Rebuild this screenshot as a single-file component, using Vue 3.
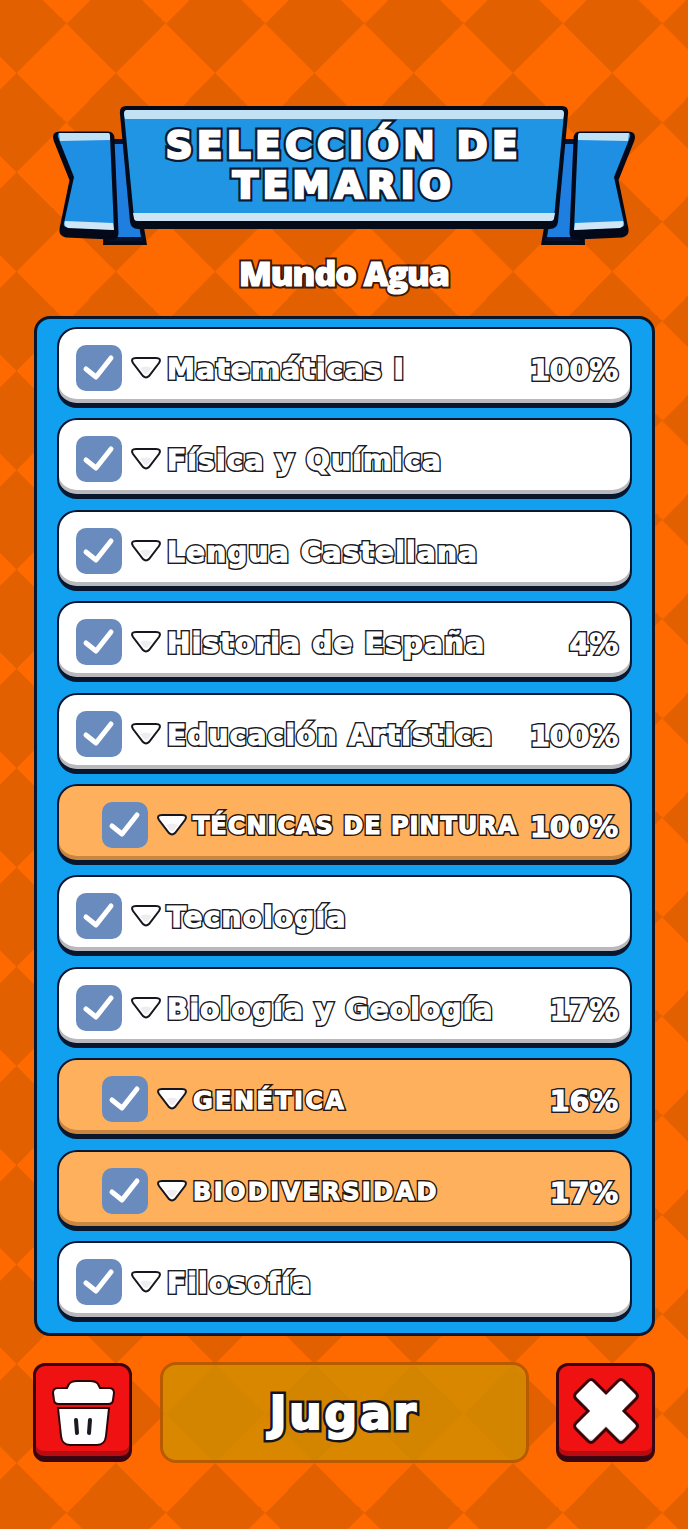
<script setup>
const topics = [
  { name: 'Matemáticas I', pct: '100%' },
  { name: 'Física y Química', pct: '' },
  { name: 'Lengua Castellana', pct: '' },
  { name: 'Historia de España', pct: '4%' },
  { name: 'Educación Artística', pct: '100%' },
  { name: 'TÉCNICAS DE PINTURA', pct: '100%', sub: true, tight: true },
  { name: 'Tecnología', pct: '' },
  { name: 'Biología y Geología', pct: '17%' },
  { name: 'GENÉTICA', pct: '16%', sub: true },
  { name: 'BIODIVERSIDAD', pct: '17%', sub: true },
  { name: 'Filosofía', pct: '' }
]

const crossPath = 'M17 5 Q20 2 23 5 L35 17 L47 5 Q50 2 53 5 L65 17 Q68 20 65 23 L53 35 L65 47 Q68 50 65 53 L53 65 Q50 68 47 65 L35 53 L23 65 Q20 68 17 65 L5 53 Q2 50 5 47 L17 35 L5 23 Q2 20 5 17 Z'
</script>

<template>
  <div class="screen">
    <header class="banner">
      <svg class="ribbon" viewBox="0 0 688 150" width="688" height="150">
        <g v-for="m in ['none', 'matrix(-1 0 0 1 688 0)']" :key="m" :transform="m === 'none' ? undefined : m">
          <path d="M103 139 H147 L142 110 H104 Z" fill="#050a18" />
          <path d="M111 33 H124 L143 135 H109 Z" fill="#06122e" />
          <path d="M114 38 H124 L141 131 H114 Z" fill="#1f7fe0" />
          <path d="M105 132 L114 122 V132 Z" fill="#1d5cc0" />
          <path d="M59 24 H108 Q113 24 113 30 L117 124 Q117 130 111 129 L66 127 Q60 126 61 120 L71 71 L55 31 Q53 24 59 24 Z" fill="#04091a" stroke="#04091a" stroke-width="3" transform="translate(0 3)" />
          <path d="M60 27 H108 Q110 27 110 30 L114 124 L66 121 Q63 120 64 117 L74 71 L58 31 Q57 27 60 27 Z" fill="#1f8fe4" />
          <path d="M59 27 H108 Q110 27 110 30 V34 L60 35 Z" fill="#bfe0f5" />
          <path d="M65 115 L113 117 L114 124 L68 122 Q63 120 65 115 Z" fill="#cfe6f6" />
        </g>
        <path d="M126 0 H562 Q569 0 568 8 L558 116 Q557 123 550 123 H138 Q131 123 130 116 L120 8 Q119 0 126 0 Z" fill="#050a18" />
        <path d="M127 4 H561 Q564 4 564 8 L554 112 Q554 115 550 115 H138 Q134 115 134 112 L124 8 Q124 4 127 4 Z" fill="#1f95e3" />
        <path d="M127 4 H561 Q564 4 564 8 L563 13 H125 L124 8 Q124 4 127 4 Z" fill="#c3e1f5" />
        <path d="M133 107 H555 L554 112 Q554 115 550 115 H138 Q134 115 134 112 Z" fill="#cde4f3" />
      </svg>
      <h1 class="title">
        <span class="ol" data-text="SELECCIÓN DE">SELECCIÓN DE</span>
        <span class="ol" data-text="TEMARIO">TEMARIO</span>
      </h1>
    </header>

    <h2 class="world"><span class="ol" data-text="Mundo Agua">Mundo Agua</span></h2>

    <section class="panel">
      <div v-for="t in topics" :key="t.name" class="row" :class="{ sub: t.sub, tight: t.tight }">
        <span class="check">
          <svg viewBox="0 0 46 46" width="46" height="46">
            <path d="M10 24 L20 32 L35 13" fill="none" stroke="#fff" stroke-width="5" stroke-linecap="round" stroke-linejoin="round" />
          </svg>
        </span>
        <svg class="tri" viewBox="0 0 32 24" width="32" height="24">
          <path d="M6 2 H26 Q32 2 29 7 L19 20 Q16 23 13 20 L3 7 Q0 2 6 2 Z" fill="#fff" stroke="#16161e" stroke-width="2" />
          <path d="M10 12 Q16 9 22 12 L18 17 Q16 19 14 17 Z" fill="#eeeef1" />
        </svg>
        <span class="name-wrap">
          <span class="name ol" :data-text="t.name">{{ t.name }}</span>
        </span>
        <span v-if="t.pct" class="pct ol" :data-text="t.pct">{{ t.pct }}</span>
      </div>
    </section>

    <footer class="actions">
      <button class="square">
        <svg viewBox="0 0 70 70" width="70" height="70">
          <path d="M21 8 Q23 5 29 5 H42 Q48 5 50 8 L52 12 H61 Q66 12 66 17 L65 24 Q65 28 60 28 H11 Q6 28 6 24 L5 17 Q5 12 10 12 H19 Z" fill="#fff" stroke="#2a0508" stroke-width="2" />
          <path d="M10 32 H61 L58 60 Q57 69 49 69 H22 Q14 69 13 60 Z" fill="#fff" stroke="#2a0508" stroke-width="2" />
          <path d="M28 44 L29 57 M42 44 L41 57" stroke="#1a1a22" stroke-width="4" stroke-linecap="round" />
        </svg>
      </button>
      <button class="play"><span class="ol" data-text="Jugar">Jugar</span></button>
      <button class="square">
        <svg viewBox="0 0 70 70" width="70" height="70">
          <defs>
            <clipPath id="cross-clip"><path :d="crossPath" /></clipPath>
          </defs>
          <path :d="crossPath" fill="#c9c9cf" />
          <g clip-path="url(#cross-clip)">
            <path :d="crossPath" fill="#fff" transform="translate(0 -3)" />
          </g>
          <path :d="crossPath" fill="none" stroke="#3a0508" stroke-width="3" />
        </svg>
      </button>
    </footer>
  </div>
</template>

<style>
html, body { margin: 0; background: #ff6a00; }
</style>

<style scoped>
.screen {
  width: 688px;
  height: 1529px;
  overflow: hidden;
  box-sizing: border-box;
  padding-top: 106px;
  background-color: #ff6a00;
  background-image: conic-gradient(from 45deg, #ff6a00 25%, #e26000 0 50%, #ff6a00 0 75%, #e26000 0);
  background-size: 99.3px 99.3px;
  background-position: -32.65px 23.35px;
  font-family: "DejaVu Sans", sans-serif;
}

/* dark outline underneath, slightly fattened white letters on top */
.ol {
  position: relative;
  display: inline-block;
  white-space: nowrap;
  color: #fff;
  paint-order: stroke fill;
}

.ol::after {
  content: attr(data-text);
  position: absolute;
  left: 0;
  top: 0;
  color: #fff;
  -webkit-text-stroke: 1px #fff;
}

.banner {
  position: relative;
  height: 123px;
}

.ribbon {
  position: absolute;
  left: 0;
  top: 0;
}

.title {
  position: relative;
  margin: 0;
  padding-top: 20px;
  display: flex;
  flex-direction: column;
  align-items: center;
  font-size: 37px;
  line-height: 40px;
  font-weight: 700;
  letter-spacing: 4.7px;
}

.title .ol { -webkit-text-stroke: 7px #0b1a33; }
.title .ol::after { -webkit-text-stroke: 2.5px #fff; }

.world {
  margin: 21px 0 0;
  height: 46px;
  text-align: center;
  font-family: "Open Sans", sans-serif;
  font-size: 34px;
  line-height: 46px;
  font-weight: 800;
  letter-spacing: -1px;
}

.world .ol { -webkit-text-stroke: 5px #3a1a0c; }
.world .ol::after { -webkit-text-stroke: 1.2px #fff; }

.panel {
  box-sizing: border-box;
  width: 621px;
  height: 1020px;
  margin: 20px 0 0 34px;
  padding: 8px 20px;
  display: flex;
  flex-direction: column;
  gap: 10.4px;
  background: #119ff0;
  border: 3px solid #08162e;
  border-radius: 16px;
}

.row {
  box-sizing: border-box;
  flex: none;
  height: 81px;
  display: flex;
  align-items: center;
  padding: 4px 12px 0 17px;
  background: #fff;
  border: 2px solid #08162e;
  border-bottom-width: 5px;
  border-radius: 20px;
  box-shadow: inset 0 -4px 0 #b9b9bd;
}

.row.sub {
  padding-left: 43px;
  background: #ffb05c;
  box-shadow: inset 0 -4px 0 #c98640;
}

.check {
  flex: none;
  width: 46px;
  height: 46px;
  background: #6a8bbd;
  border-radius: 10px;
}

.check svg { display: block; }

.tri {
  flex: none;
  margin: 0 5px 0 8px;
}

.name-wrap {
  flex: 1;
  padding-top: 3px;
}

.name {
  font-size: 28px;
  font-weight: 700;
  letter-spacing: 1.2px;
  -webkit-text-stroke: 4px #1c1c24;
}

.sub .name {
  font-size: 24px;
  letter-spacing: 2.4px;
  -webkit-text-stroke: 4px #2a1608;
}

.tight .name {
  letter-spacing: 1px;
}

.pct {
  flex: none;
  margin-top: 5px;
  font-size: 28.5px;
  font-weight: 700;
  -webkit-text-stroke: 4px #1c1c24;
}

.actions {
  display: flex;
  align-items: center;
  justify-content: space-between;
  margin: 26px 33px 0;
}

.actions button {
  padding: 0;
  font-family: inherit;
  box-sizing: border-box;
}

.square {
  width: 99px;
  height: 99px;
  display: flex;
  align-items: center;
  justify-content: center;
  background: #f01212;
  border: 3px solid #3a0510;
  border-bottom-width: 6px;
  border-radius: 12px;
  box-shadow: inset 0 -5px 0 #b80c10;
}

.play {
  width: 369px;
  height: 101px;
  background: rgba(205, 145, 0, 0.75);
  border: 3px solid #b85a00;
  border-radius: 16px;
  font-size: 46px;
  font-weight: 700;
  letter-spacing: 2.5px;
}

.play .ol { -webkit-text-stroke: 7px #141420; }
.play .ol::after { -webkit-text-stroke: 2px #fff; }
</style>
